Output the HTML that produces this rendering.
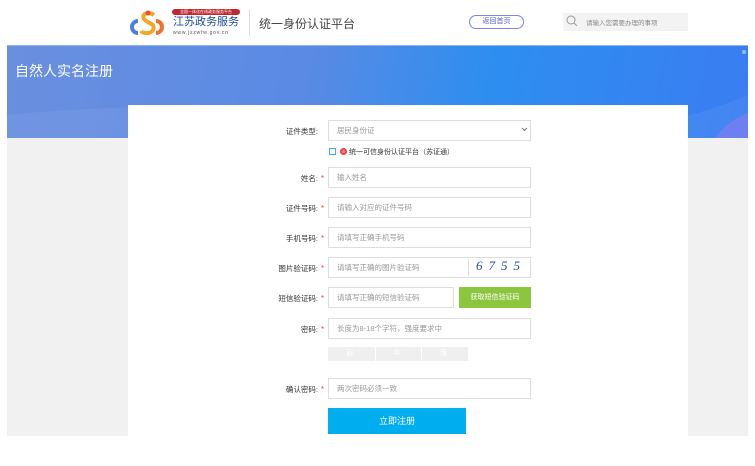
<!DOCTYPE html>
<html><head><meta charset="utf-8">
<style>
*{margin:0;padding:0;box-sizing:border-box}
body{width:755px;height:466px;background:#fff;font-family:"Liberation Sans","Noto Sans CJK SC",sans-serif;position:relative;overflow:hidden}
.a{position:absolute}
.hdr{left:0;top:0;width:755px;height:45px;background:#fff}
.main{left:7px;top:45px;width:741px;height:391px;background:#f1f1f1}
.banner{left:7px;top:45px;width:741px;height:93px;background:linear-gradient(100deg,#6a8fe0 0%,#5a8ae4 40%,#2d8ef0 65%,#3a7df2 100%);border-top:1px solid #8fb5f0}
.card{left:128px;top:105px;width:560px;height:331px;background:#fff}
.lbl{font-size:7.5px;color:#333;text-align:right;width:120px;left:198px}
.st{font-size:8px;color:#e44;left:321px;line-height:10px}
.in{left:328px;width:203px;height:21px;border:1px solid #ddd;font-size:7.5px;color:#999;padding-left:8px;line-height:19px;background:#fff}
</style></head><body>
<div class="a hdr"></div>
<svg class="a" style="left:126px;top:9px" width="42" height="28" viewBox="0 0 42 28">
<path d="M12 12 A6 6 0 1 0 12 24" stroke="#4a7fe0" stroke-width="4" fill="none"/>
<path d="M28 6 C22 2 15 5 18 10 C22 15 30 14 27 21 C24 26 16 24 15 22" stroke="#f5a623" stroke-width="4" fill="none"/>
<path d="M30 12 A6 6 0 1 1 30 24" stroke="#f07030" stroke-width="4" fill="none"/>
<circle cx="22" cy="4" r="2.5" fill="#e74c3c"/>
</svg>
<div class="a" style="left:172px;top:9px;width:68px;height:6px;background:#c0282e;border-radius:3px;font-size:4px;color:#fff;text-align:center;line-height:6px">全国一体化在线政务服务平台</div>
<div class="a" style="left:173px;top:16px;font-size:11px;color:#1a4c9a;line-height:13px">江苏政务服务</div>
<div class="a" style="left:173px;top:30px;font-size:5px;color:#555;letter-spacing:0.8px">www.jszwfw.gov.cn</div>
<div class="a" style="left:249px;top:10px;width:1px;height:26px;background:#ddd"></div>
<div class="a" style="left:259px;top:15px;font-size:12px;color:#444">统一身份认证平台</div>
<div class="a" style="left:469px;top:15px;width:55px;height:14px;border:1px solid #7b86e8;border-radius:8px;font-size:7px;color:#5560d8;text-align:center;line-height:12px">返回首页</div>
<div class="a" style="left:563px;top:13px;width:125px;height:18px;background:#f3f3f3"></div>
<svg class="a" style="left:566px;top:15px" width="12" height="12"><circle cx="5" cy="5" r="4" stroke="#999" fill="none"/><path d="M8 8 L11 11" stroke="#999"/></svg>
<div class="a" style="left:586px;top:17px;font-size:6.5px;color:#888">请输入您需要办理的事项</div>
<div class="a main"></div>
<div class="a banner"></div>
<svg class="a" style="left:7px;top:45px" width="741" height="93"><path d="M0 70 Q200 50 400 80 T741 50 L741 93 L0 93Z" fill="rgba(255,255,255,0.06)"/><ellipse cx="780" cy="120" rx="80" ry="60" fill="#8a7bf0" opacity=".6"/><circle cx="737" cy="7" r="2" fill="#8fc0f5"/></svg>
<div class="a" style="left:15px;top:61px;font-size:14px;color:#fff">自然人实名注册</div>
<div class="a card"></div>

<div class="a lbl" style="top:126px">证件类型:</div>
<div class="a in" style="top:120px">居民身份证</div>
<svg class="a" style="left:521px;top:127px" width="7" height="5"><path d="M1 1 L3.5 3.5 L6 1" stroke="#777" fill="none"/></svg>
<div class="a" style="left:329px;top:148px;width:7px;height:7px;border:1px solid #4aa8e8"></div>
<div class="a" style="left:340px;top:148px;width:7px;height:7px;border-radius:50%;background:#d93;box-shadow:inset 0 0 0 2px #e46"></div>
<div class="a" style="left:349px;top:147px;font-size:7px;color:#333">统一可信身份认证平台（苏证通）</div>

<div class="a lbl" style="top:173px">姓名:</div><div class="a st" style="top:174px">*</div>
<div class="a in" style="top:167px">输入姓名</div>
<div class="a lbl" style="top:203px">证件号码:</div><div class="a st" style="top:204px">*</div>
<div class="a in" style="top:197px">请输入对应的证件号码</div>
<div class="a lbl" style="top:233px">手机号码:</div><div class="a st" style="top:234px">*</div>
<div class="a in" style="top:227px">请填写正确手机号码</div>
<div class="a lbl" style="top:263px">图片验证码:</div><div class="a st" style="top:264px">*</div>
<div class="a in" style="top:257px">请填写正确的图片验证码</div>
<div class="a" style="left:468px;top:259px;width:1px;height:17px;background:#ddd"></div>
<div class="a" style="left:476px;top:258px;font-size:13px;color:#2a4aa0;font-style:italic;letter-spacing:6px;font-family:'Liberation Serif',serif">6755</div>
<div class="a lbl" style="top:293px">短信验证码:</div><div class="a st" style="top:294px">*</div>
<div class="a in" style="top:287px;width:126px">请填写正确的短信验证码</div>
<div class="a" style="left:459px;top:287px;width:72px;height:21px;background:#8cc63f;color:#fff;font-size:7px;text-align:center;line-height:21px">获取短信验证码</div>
<div class="a lbl" style="top:324px">密码:</div><div class="a st" style="top:325px">*</div>
<div class="a in" style="top:318px">长度为8-18个字符，强度要求中</div>
<div class="a" style="left:328px;top:347px;width:140px;height:14px;background:#efefef;font-size:7px;color:#fff;line-height:14px">
<span class="a" style="left:18px">弱</span><span class="a" style="left:47px;width:1px;height:14px;background:#fff"></span><span class="a" style="left:66px">中</span><span class="a" style="left:93px;width:1px;height:14px;background:#fff"></span><span class="a" style="left:112px">强</span></div>
<div class="a lbl" style="top:384px">确认密码:</div><div class="a st" style="top:385px">*</div>
<div class="a in" style="top:378px">两次密码必须一致</div>
<div class="a" style="left:328px;top:408px;width:138px;height:26px;background:#00aeef;color:#fff;font-size:9px;text-align:center;line-height:26px">立即注册</div>
</body></html>
